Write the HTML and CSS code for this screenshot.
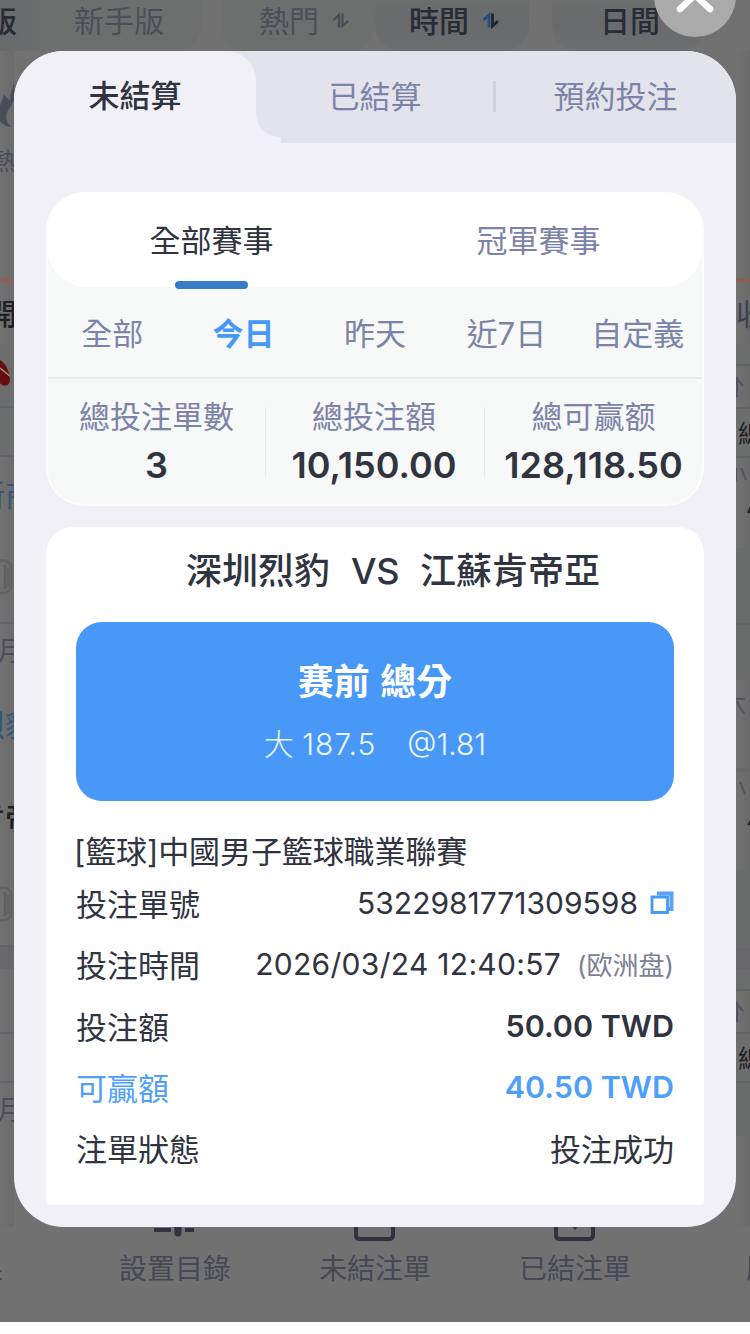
FILE: index.html
```html
<!DOCTYPE html>
<html lang="zh-Hant">
<head>
<meta charset="utf-8">
<title>注單</title>
<link rel="stylesheet" href="styles.css">
</head>
<body>
<div class="screen">
  <header class="topbar">
    <div class="pill pill-first">版</div>
    <div class="pill pill-novice">新手版</div>
    <div class="pill pill-hot"><span>熱門</span>
      <svg class="sort" viewBox="0 0 18 18"><path d="M1.500 8 L7 3 V15.500 M10.500 1.500 V14 L16 9" fill="none" stroke="#4b4d58" stroke-width="2.300"/></svg>
    </div>
    <div class="pill pill-time"><span>時間</span>
      <svg class="sort" viewBox="0 0 18 18"><path d="M1.500 8 L7 3 V15.500" fill="none" stroke="#254d80" stroke-width="2.800"/><path d="M10.500 1.500 V14 L16 9" fill="none" stroke="#20242f" stroke-width="2.800"/></svg>
    </div>
    <div class="pill pill-day">日間</div>
  </header>

  <main class="backdrop">
    <div class="strip strip-left">
      <div class="cell h68"><svg class="flame" viewBox="0 0 14 50"><path d="M14 2 C13 11 10 16 10 23 C8 20 5 19 4 16 C3 23 0 27 -5 34 C-3 43 5 49 11 49 C4 42 5 35 11 28 C12 24 14 25 14 20Z" fill="#4a4c5a"/></svg></div>
      <div class="cell h63 small hot"><span>熱</span></div>
      <div class="cell redline"></div>
      <div class="cell h62 black open"><span>開</span></div>
      <div class="cell h64 tint line"><svg class="ball" viewBox="0 0 14 34"><path d="M0 1 C6 4 10 14 10 21 C10 28 2 28 0 24Z" fill="#650f11"/><path d="M0 9 L10 17" stroke="#a28b8b" stroke-width="1.500"/></svg></div>
      <div class="cell h49 tint line"></div>
      <div class="cell h75 blue pair"><span>新商</span></div>
      <div class="cell h92 line"><svg class="badge" viewBox="0 0 14 36"><path d="M-2 2 C7 0 11 3 11 10 V26 C11 33 7 35 -2 34 M5 6 V30 M5 10 H8 V17 H5 M5 20 H8 V27 H5" fill="none" stroke="#606161" stroke-width="2.500"/></svg></div>
      <div class="cell h55 small month"><span>月</span></div>
      <div class="cell h92 blue pair"><span>烈豹</span></div>
      <div class="cell h92 black pair"><span>肯帝</span></div>
      <div class="cell h84 line"><svg class="badge" viewBox="0 0 14 36"><path d="M-2 2 C7 0 11 3 11 10 V26 C11 33 7 35 -2 34 M5 6 V30 M5 10 H8 V17 H5 M5 20 H8 V27 H5" fill="none" stroke="#606161" stroke-width="2.500"/></svg></div>
      <div class="cell h22 band"></div>
      <div class="cell h65 line"></div>
      <div class="cell h49 line"></div>
      <div class="cell h55 small month"><span>月</span></div>
    </div>
    <div class="strip strip-right">
      <div class="cell h131"></div>
      <div class="cell h68"></div>
      <div class="cell redline"></div>
      <div class="cell h62 slate"><span>收</span></div>
      <div class="cell h21 tint line"></div>
      <div class="cell h43 line"><svg class="tick" viewBox="0 0 14 20"><path d="M1 0 V20 M1 2 L7 9" fill="none" stroke="#535461" stroke-width="2"/></svg></div>
      <div class="cell h49 tint line num"><span>總</span></div>
      <div class="cell h90"><svg class="tick up" viewBox="0 0 14 50"><path d="M0 5 V18 M5 5 L10 17" fill="none" stroke="#535461" stroke-width="2"/><path d="M11 50 L14 43 V50Z" fill="#1f2024"/></svg></div>
      <div class="cell h77 green line"></div>
      <div class="cell h55 green"></div>
      <div class="cell h92 line thick"><svg class="tick raise" viewBox="0 0 14 20"><path d="M0 1 H9 M1 3 Q4 12 9 16" fill="none" stroke="#535461" stroke-width="2"/></svg></div>
      <div class="cell h97"><svg class="tick up" viewBox="0 0 14 50"><path d="M4 5 L9 17" fill="none" stroke="#535461" stroke-width="2"/><path d="M11 48 L14 43 V48Z" fill="#1f2024"/></svg></div>
      <div class="cell h79 green"></div>
      <div class="cell h22 band"></div>
      <div class="cell h21 tint line"></div>
      <div class="cell h43 line"><svg class="tick" viewBox="0 0 14 20"><path d="M1 0 V20 M1 2 L7 9" fill="none" stroke="#535461" stroke-width="2"/></svg></div>
      <div class="cell h49 tint line num"><span>總</span></div>
      <div class="cell h53 green"></div>
    </div>
  </main>

  <nav class="bottom">
    <div class="nav edge-left"><span>果</span></div>
    <div class="nav">
      <svg class="nav-icon" viewBox="0 0 44 20"><path d="M1 8 H18 M32 8 H41" stroke="#31323f" stroke-width="4"/><path d="M25 0 V11" stroke="#31323f" stroke-width="7" stroke-linecap="round"/></svg>
      <span>設置目錄</span>
    </div>
    <div class="nav">
      <svg class="nav-icon" viewBox="0 0 44 20"><path d="M3 0 V13 Q3 17 7 17 H36 Q40 17 40 13 V0" fill="none" stroke="#31323f" stroke-width="4"/></svg>
      <span>未結注單</span>
    </div>
    <div class="nav">
      <svg class="nav-icon" viewBox="0 0 44 20"><path d="M3 0 V13 Q3 17 7 17 H36 Q40 17 40 13 V0" fill="none" stroke="#31323f" stroke-width="4"/><path d="M19 4 H25 L22 8Z" fill="#31323f"/></svg>
      <span>已結注單</span>
    </div>
    <div class="nav edge-right"><span>服</span></div>
  </nav>
  <div class="home-bar"></div>

  <button class="close" aria-label="關閉"><svg viewBox="0 0 82 82"><path d="M26 26 L56 54 M56 26 L26 54" stroke="#fff" stroke-width="6.500" stroke-linecap="round"/></svg></button>

  <section class="dialog">
    <div class="tabs">
      <div class="tab tab-active">未結算
        <svg class="tab-curve" viewBox="0 0 25 32"><path d="M0 0 C0 16 10 26 25 26 V32 H0Z" fill="#f0f0f6"/></svg>
      </div>
      <div class="tab tab-settled">已結算</div>
      <i class="tab-sep"></i>
      <div class="tab tab-reserve">預約投注</div>
    </div>

    <div class="summary">
      <div class="modes">
        <div class="mode mode-on">全部賽事</div>
        <div class="mode">冠軍賽事</div>
      </div>
      <div class="ranges">
        <span>全部</span><span class="range-on">今日</span><span>昨天</span><span>近7日</span><span>自定義</span>
      </div>
      <div class="stats">
        <div class="stat"><span class="stat-label">總投注單數</span><b>3</b></div>
        <i></i>
        <div class="stat stat-mid"><span class="stat-label">總投注額</span><b>10,150.00</b></div>
        <i></i>
        <div class="stat"><span class="stat-label">總可赢额</span><b>128,118.50</b></div>
      </div>
    </div>

    <article class="bet">
      <h2 class="match"><span>深圳烈豹</span><span class="vs">VS</span><span>江蘇肯帝亞</span></h2>
      <div class="pick">
        <strong>赛前 總分</strong>
        <p><span>大 <span class="line-value">187.5</span></span><span>@1.81</span></p>
      </div>
      <div class="league">[籃球]中國男子籃球職業聯賽</div>
      <div class="row"><span>投注單號</span><span class="value"><span class="order">5322981771309598</span><svg class="copy" viewBox="0 0 24 24"><path d="M7 2.500 H21.500 V18 H18" fill="none" stroke="#58a2f8" stroke-width="4"/><path d="M2 6 H17.500 V21.500 H2Z" fill="#fff" stroke="#4898f8" stroke-width="2.800"/></svg></span></div>
      <div class="row"><span>投注時間</span><span class="value"><span class="time">2026/03/24 12:40:57</span><span class="market">(欧洲盘)</span></span></div>
      <div class="row"><span>投注額</span><b class="amount">50.00 TWD</b></div>
      <div class="row row-win"><span>可贏額</span><b class="amount">40.50 TWD</b></div>
      <div class="row"><span>注單狀態</span><span>投注成功</span></div>
    </article>
  </section>
</div>
</body>
</html>
```
FILE: styles.css
```css
* { box-sizing: border-box; }
body { margin: 0; font-family: Inter, "Noto Sans CJK TC", sans-serif; color: #303340; }
.screen { position: relative; width: 750px; height: 1334px; overflow: hidden; background: #717171; display: flex; flex-direction: column; }

/* page behind the dialog */
.topbar { height: 51px; display: flex; align-items: flex-start; background: #717171; }
.pill { height: 51px; line-height: 42px; font-size: 30px; color: #4d4f58; background: #6d6e6e; border-radius: 0 0 26px 26px; white-space: nowrap; flex: none; }
.pill-first { width: 46px; text-indent: -13px; color: #292b35; font-weight: 500; border-radius: 0; background: linear-gradient(90deg, #686a6c, #6d6e6e); }
.pill-novice { width: 155px; padding-left: 28px; margin-right: 20px; border-radius: 0 0 26px 0; }
.pill-hot { width: 154px; padding-left: 38px; }
.pill-time { width: 154px; padding-left: 34px; color: #292b35; font-weight: 500; background: linear-gradient(#6d6e6e, #686a6c 45%, #6d6e6e); }
.pill-day { width: 154px; margin-left: 23px; padding-left: 48px; color: #292b35; font-weight: 500; background: linear-gradient(#6d6e6e, #686a6c 45%, #6d6e6e); }
.sort { width: 18px; height: 18px; margin-left: 5px; vertical-align: 2px; }

.backdrop { height: 1176px; display: flex; justify-content: space-between; }
.strip { width: 14px; padding-top: 28px; overflow: hidden; display: flex; flex-direction: column; background: linear-gradient(90deg, #717171, #6b6b6b); }
.cell { flex: none; display: flex; align-items: center; justify-content: flex-start; overflow: hidden; }
.h21 { height: 21px; } .h22 { height: 22px; } .h43 { height: 43px; } .h49 { height: 49px; }
.h53 { height: 53px; } .h55 { height: 55px; } .h62 { height: 62px; } .h63 { height: 131px; }
.h64 { height: 63px; } .h65 { height: 65px; } .h68 { height: 68px; } .h75 { height: 75px; }
.h77 { height: 77px; } .h79 { height: 79px; } .h84 { height: 84px; } .h90 { height: 90px; }
.h92 { height: 92px; } .h97 { height: 97px; } .h131 { height: 131px; }
.redline { height: 5px; background: #85605f; }
.line { border-bottom: 2px solid #636469; }
.thick { border-bottom: 4px solid #686969; }
.tint { background: #6c6e6d; }
.green { background: #6a6d6b; }
.band { background: #68686b; }
.cell span { flex: none; line-height: 1; }
.small { color: #4b4d5a; }
.hot { font-size: 24px; align-items: flex-start; padding-top: 3px; text-indent: -8px; }
.month { font-size: 27px; text-indent: -3px; }
.black { font-size: 30px; font-weight: 500; color: #1f2024; }
.blue { font-size: 30px; color: #31577b; }
.open { text-indent: -13px; }
.pair { text-indent: -25px; }
.slate { font-size: 30px; color: #3c3f55; }
.num { font-size: 25px; color: #1f2024; padding-left: 2px; padding-top: 4px; }
.flame { flex: none; width: 14px; height: 50px; margin-top: -20px; }
.ball, .badge { flex: none; width: 14px; height: 36px; }
.tick { flex: none; width: 14px; height: 20px; }
.up { height: 50px; align-self: flex-start; margin-top: 5px; }
.raise { margin-top: -32px; }

.bottom { height: 95px; display: flex; justify-content: center; }
.nav { flex: none; width: 200px; height: 95px; display: flex; flex-direction: column; align-items: center; font-size: 28px; line-height: 42px; color: #464854; }
.nav-icon { width: 44px; height: 20px; margin-top: -5px; margin-bottom: 6px; }
.edge-left, .edge-right { width: 75px; padding-top: 21px; }
.edge-left { align-items: flex-start; text-indent: -25px; }
.edge-right { align-items: flex-end; }
.edge-right span { margin-right: -24px; }
.home-bar { height: 12px; background: #fdfdfd; }

.close { position: absolute; left: 654px; top: -45px; width: 82px; height: 82px; padding: 0; border: 0; border-radius: 50%; background: #aaa; }
.close svg { display: block; width: 82px; height: 82px; }

/* dialog */
.dialog { position: absolute; left: 14px; top: 51px; width: 722px; height: 1176px; border-radius: 50px; overflow: hidden; background: #f0f0f6; }
.tabs { height: 92px; display: flex; align-items: flex-start; background: #e3e4eb; font-size: 31px; line-height: 92px; color: #7c83a8; }
.tab { text-align: center; flex: none; }
.tab-active { position: relative; width: 242px; height: 92px; line-height: 90px; background: #f0f0f6; border-top-right-radius: 30px; color: #303340; font-weight: 500; }
.tab-curve { position: absolute; left: 242px; bottom: 0; width: 25px; height: 32px; }
.tab-settled { width: 237px; padding-left: 1px; }
.tab-sep { width: 3px; height: 31px; margin-top: 30px; background: #cfd2df; }
.tab-reserve { width: 239px; }

.summary { width: 658px; height: 314px; margin: 49px 0 0 32px; border: 2px solid #fdfdfe; border-top: 0; border-radius: 38px; background: #f7f8f8; }
.modes { height: 95px; display: flex; background: #fff; border-radius: 38px; font-size: 31px; line-height: 98px; }
.mode { position: relative; width: 50%; text-align: center; color: #7c83a8; }
.mode-on { color: #303340; }
.mode-on::after { content: ""; position: absolute; left: 127px; top: 89px; width: 73px; height: 8px; border-radius: 4px; background: #3a7bc8; }
.ranges { height: 92px; display: grid; grid-template-columns: repeat(5, 131.4px); justify-content: center; text-align: center; border-bottom: 2px solid #e6e8ef; font-size: 31px; line-height: 93px; color: #7c83a8; }
.range-on { color: #4898f8; font-weight: 700; }
.stats { height: 125px; display: flex; align-items: flex-start; }
.stats i { width: 2px; height: 70px; margin-top: 28px; background: #e7e8ef; }
.stat { width: 217px; flex: none; display: flex; flex-direction: column; align-items: center; white-space: nowrap; }
.stat-mid { width: 218px; padding-right: 2px; }
.stat-label { font-size: 31px; line-height: 48px; margin-top: 14px; color: #7c83a8; }
.stat b { font-size: 36px; font-weight: 600; line-height: 48px; }

.bet { width: 658px; height: 678px; margin: 21px 0 0 32px; padding: 0 30px; border-radius: 26px 26px 3px 3px; background: #fff; }
.match { height: 95px; margin: 0; padding-left: 36px; display: flex; justify-content: center; gap: 21px; font-size: 36px; line-height: 88px; font-weight: 500; }
.vs { letter-spacing: -0.5px; }
.pick { height: 179px; border-radius: 26px; background: #4898f8; color: #fff; text-align: center; padding-top: 35px; }
.pick strong { display: block; font-size: 36px; line-height: 50px; font-weight: 700; word-spacing: 2px; }
.pick p { display: flex; justify-content: center; gap: 31px; margin: 12px 0 0; font-size: 30px; line-height: 50px; font-weight: 300; color: #edf5ff; }
.line-value { letter-spacing: 1px; }
.league { height: 47px; margin: 24px 0 0 -2px; font-size: 31px; line-height: 54px; letter-spacing: -0.1px; }
.row { height: 61.3px; display: flex; justify-content: space-between; align-items: center; font-size: 31px; white-space: nowrap; }
.value { display: flex; align-items: center; }
.copy { width: 24px; height: 24px; margin-left: 12px; }
.order { font-size: 30px; }
.time { font-size: 30px; letter-spacing: 0.3px; }
.market { font-size: 26px; color: #7c7f95; margin-left: 16px; }
.amount { font-weight: 600; font-size: 30.5px; }
.row-win { color: #4f9ff9; }
```
